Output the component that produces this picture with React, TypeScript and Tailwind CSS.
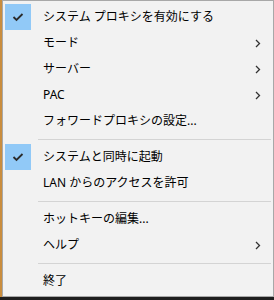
const items: Array<
  | { type: 'item'; label: string; checked?: boolean; sub?: boolean }
  | { type: 'sep' }
> = [
  { type: 'item', label: 'システム プロキシを有効にする', checked: true },
  { type: 'item', label: 'モード', sub: true },
  { type: 'item', label: 'サーバー', sub: true },
  { type: 'item', label: 'PAC', sub: true },
  { type: 'item', label: 'フォワードプロキシの設定...' },
  { type: 'sep' },
  { type: 'item', label: 'システムと同時に起動', checked: true },
  { type: 'item', label: 'LAN からのアクセスを許可' },
  { type: 'sep' },
  { type: 'item', label: 'ホットキーの編集...' },
  { type: 'item', label: 'ヘルプ', sub: true },
  { type: 'sep' },
  { type: 'item', label: '終了' },
];

const Check = () => (
  <svg width="12" height="10" viewBox="0 0 12 10">
    <path d="M1.5 5 L4.5 8 L10.5 2" fill="none" stroke="#2b2b2b" strokeWidth="1.8" />
  </svg>
);

const Chevron = () => (
  <svg width="6" height="9" viewBox="0 0 6 9">
    <path d="M1 1 L4.5 4.5 L1 8" fill="none" stroke="#333" strokeWidth="1.3" />
  </svg>
);

const App = () => {
  return (
    <div className="w-[274px] h-[300px] flex flex-col bg-[#1e1e1e] overflow-hidden">
      <div className="flex flex-1">
        <div className="w-[2px] bg-[#c98d3e]"></div>
        <div
          className="flex-1 bg-[#f2f2f2] border border-[#a8a8a8] pt-[3px] text-[12px] text-black"
          style={{ fontFamily: '"Noto Sans", "Noto Sans CJK JP", sans-serif' }}
        >
          {items.map((item, i) =>
            item.type === 'sep' ? (
              <div key={i} className="h-[10px] flex items-center pl-[35px] pr-[2px]">
                <div className="h-[1px] w-full bg-[#d4d4d4]"></div>
              </div>
            ) : (
              <div key={i} className="h-[26px] flex items-center pl-[2px] pr-[12px]">
                <div className="w-[26px] h-[26px] flex items-center justify-center">
                  {item.checked && (
                    <div className="w-[26px] h-[26px] bg-[#91c9f7] flex items-center justify-center">
                      <Check />
                    </div>
                  )}
                </div>
                <span className="ml-[12px] flex-1 whitespace-nowrap">{item.label}</span>
                {item.sub && <Chevron />}
              </div>
            )
          )}
        </div>
      </div>
      <div className="h-[3px] bg-[#1e1e1e]"></div>
    </div>
  );
};

export default App;
